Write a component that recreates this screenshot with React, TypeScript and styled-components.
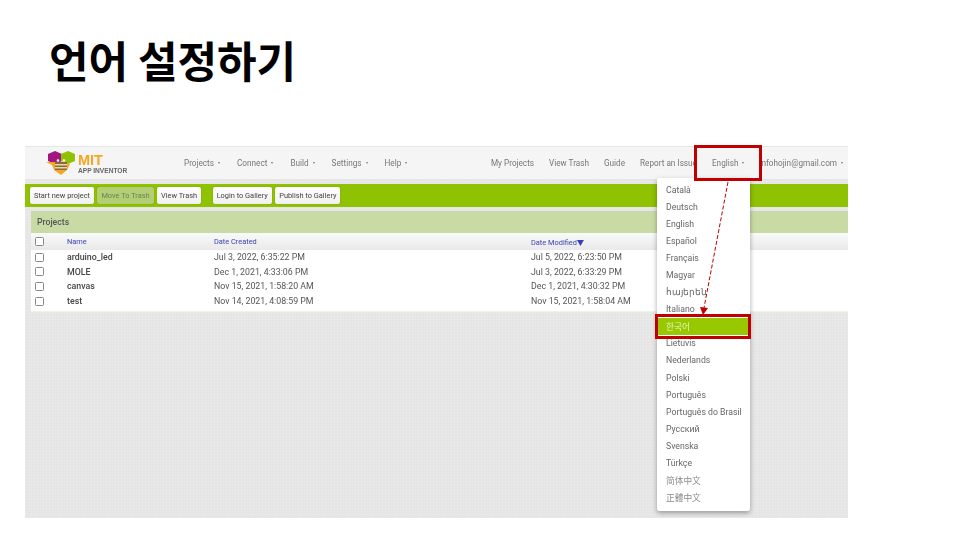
import React from "react";
import styled, { createGlobalStyle } from "styled-components";

const projects = [
  { name: "arduino_led", created: "Jul 3, 2022, 6:35:22 PM", modified: "Jul 5, 2022, 6:23:50 PM" },
  { name: "MOLE", created: "Dec 1, 2021, 4:33:06 PM", modified: "Jul 3, 2022, 6:33:29 PM" },
  { name: "canvas", created: "Nov 15, 2021, 1:58:20 AM", modified: "Dec 1, 2021, 4:30:32 PM" },
  { name: "test", created: "Nov 14, 2021, 4:08:59 PM", modified: "Nov 15, 2021, 1:58:04 AM" },
];

const languages = [
  "Català", "Deutsch", "English", "Español", "Français", "Magyar", "հայերեն", "Italiano", "한국어",
  "Lietuvis", "Nederlands", "Polski", "Português", "Português do Brasil", "Русский", "Svenska",
  "Türkçe", "简体中文", "正體中文",
];

const Logo = () => (
  <svg width="30" height="24" viewBox="0 0 30 24">
    <polygon points="9,0 16,3 16,10 9,13 2,10 2,3" fill="#a1167f" />
    <polygon points="22,0 29,3 29,10 22,13 15,10 15,3" fill="#8fc202" />
    <polygon points="0,11 9,11 9,16 12,18 18,18 21,16 21,12 24,13 21,19 15,24 8,19 6,14" fill="#f6a623" />
    <rect x="9" y="11" width="12" height="8" fill="#8a6a3a" />
    <rect x="9" y="13" width="12" height="1.5" fill="#e8d5a8" />
    <rect x="9" y="16" width="12" height="1.5" fill="#e8d5a8" />
    <circle cx="12" cy="9.5" r="1.3" fill="#fff" />
    <circle cx="18" cy="9.5" r="1.3" fill="#fff" />
  </svg>
);

const App: React.FC = () => {
  return (
    <Page>
      <GlobalStyle />
      <Title>언어 설정하기</Title>
      <Shot>
        <ShotInner>
          <NavBar>
            <LogoWrap>
              <Logo />
              <LogoText>
                <LogoMit>MIT</LogoMit>
                <LogoSub>APP INVENTOR</LogoSub>
              </LogoText>
            </LogoWrap>
            <NavLeft>
              <NavItem>Projects<Caret /></NavItem>
              <NavItem>Connect<Caret /></NavItem>
              <NavItem>Build<Caret /></NavItem>
              <NavItem>Settings<Caret /></NavItem>
              <NavItem>Help<Caret /></NavItem>
            </NavLeft>
            <NavRight>
              <NavItem>My Projects</NavItem>
              <NavItem>View Trash</NavItem>
              <NavItem>Guide</NavItem>
              <NavItem>Report an Issue</NavItem>
              <NavItem>English<Caret /></NavItem>
              <NavItem>infohojin@gmail.com<Caret /></NavItem>
            </NavRight>
          </NavBar>
          <Toolbar>
            <ToolGroup>
              <ToolButton>Start new project</ToolButton>
              <ToolButton $disabled>Move To Trash</ToolButton>
              <ToolButton>View Trash</ToolButton>
            </ToolGroup>
            <ToolGroup>
              <ToolButton>Login to Gallery</ToolButton>
              <ToolButton>Publish to Gallery</ToolButton>
            </ToolGroup>
          </Toolbar>
          <Panel>
            <PanelHeader>Projects</PanelHeader>
            <TableHead>
              <CheckBox />
              <HeadCell>Name</HeadCell>
              <HeadCell>Date Created</HeadCell>
              <HeadCell>Date Modified▼</HeadCell>
            </TableHead>
            <TableBody>
              {projects.map((p) => (
                <Row key={p.name}>
                  <CheckBox />
                  <NameCell>{p.name}</NameCell>
                  <DateCell>{p.created}</DateCell>
                  <DateCell>{p.modified}</DateCell>
                </Row>
              ))}
            </TableBody>
          </Panel>
          <Menu>
            {languages.map((l, i) => (
              <MenuItem key={l} $active={l === "한국어"} $faint={i >= 17}>{l}</MenuItem>
            ))}
          </Menu>
        </ShotInner>
        <EnglishMark />
        <KoreanMark />
        <ArrowLayer width="823" height="372" viewBox="0 0 823 372">
          <line x1="703" y1="36" x2="679" y2="162" stroke="#c00000" strokeWidth="1" strokeDasharray="4 2" />
          <polygon points="675,161 683,162 678,169" fill="#c00000" />
        </ArrowLayer>
      </Shot>
    </Page>
  );
};

const GlobalStyle = createGlobalStyle`
  html, body {
    margin: 0;
    padding: 0;
    background: #fff;
  }
`;

const Page = styled.div`
  width: 960px;
  height: 540px;
  overflow: hidden;
  font-family: Roboto, "Noto Sans CJK KR", sans-serif;
`;

const Title = styled.h1`
  margin: 0;
  padding: 29px 0 0 49px;
  height: 146px;
  box-sizing: border-box;
  font-family: "Noto Sans CJK KR", sans-serif;
  font-size: 43px;
  font-weight: 700;
  line-height: 60px;
  color: #000;
`;

const Shot = styled.div`
  position: relative;
  margin-left: 25px;
  width: 823px;
  height: 372px;
`;

const ShotInner = styled.div`
  position: relative;
  width: 100%;
  height: 100%;
  overflow: hidden;
  filter: blur(0.4px);
  background-color: #e5e5e5;
  background-image: repeating-linear-gradient(90deg, rgba(255, 255, 255, 0.1) 0 1px, transparent 1px 3px),
    repeating-linear-gradient(0deg, rgba(255, 255, 255, 0.1) 0 1px, transparent 1px 3px);
`;

const NavBar = styled.div`
  display: flex;
  align-items: center;
  height: 33px;
  background: #f5f5f5;
  border-top: 1px solid #e6e6e6;
  box-sizing: border-box;
  padding-left: 21px;
`;

const LogoWrap = styled.div`
  display: flex;
  align-items: center;
  gap: 2px;
  width: 138px;
  flex: none;
`;

const LogoText = styled.div`
  display: flex;
  flex-direction: column;
  margin-top: 2px;
`;

const LogoMit = styled.span`
  font-family: "Liberation Sans", sans-serif;
  font-size: 14.5px;
  line-height: 13px;
  font-weight: 700;
  color: #f5a623;
`;

const LogoSub = styled.span`
  font-family: "Liberation Sans", sans-serif;
  font-size: 6.6px;
  line-height: 8px;
  font-weight: 700;
  color: #666;
  white-space: nowrap;
`;

const NavLeft = styled.div`
  display: flex;
  gap: 17px;
`;

const NavRight = styled.div`
  display: flex;
  margin-left: auto;
  margin-right: 5px;
  gap: 15px;
`;

const NavItem = styled.span`
  display: inline-flex;
  align-items: center;
  font-size: 8.2px;
  color: #777;
  white-space: nowrap;
`;

const Caret = styled.i`
  display: inline-block;
  margin-left: 4px;
  border-top: 2px solid #777;
  border-left: 1.5px solid transparent;
  border-right: 1.5px solid transparent;
`;

const Toolbar = styled.div`
  display: flex;
  align-items: center;
  gap: 11.5px;
  height: 23px;
  margin-top: 5px;
  padding-left: 5px;
  background: #8fc202;
`;

const ToolGroup = styled.div`
  display: flex;
  gap: 3.5px;
`;

const ToolButton = styled.div<{ $disabled?: boolean }>`
  height: 17px;
  padding: 0 4px;
  display: flex;
  align-items: center;
  border-radius: 2px;
  font-size: 7.4px;
  white-space: nowrap;
  color: ${(p) => (p.$disabled ? "#6f7f50" : "#444")};
  background: ${(p) => (p.$disabled ? "#b3cf75" : "linear-gradient(#fff, #f0f0f0)")};
  box-shadow: 0 0 1px rgba(0, 0, 0, 0.4);
`;

const Panel = styled.div`
  margin: 4px 0 0 6px;
  background: #fff;
  padding-bottom: 3px;
  box-shadow: 0 1px 1px #f1f1e6;
`;

const PanelHeader = styled.div`
  height: 22px;
  display: flex;
  align-items: center;
  padding-left: 6px;
  background: #c9dba5;
  font-size: 8.7px;
  font-weight: 500;
  color: #555;
`;

const tableColumns = "36px 147px 317px 1fr";

const TableHead = styled.div`
  display: grid;
  grid-template-columns: ${tableColumns};
  align-items: center;
  height: 17px;
  background: linear-gradient(#fafafa, #e9e9e9);
`;

const HeadCell = styled.span`
  font-size: 7.4px;
  color: #3a3fb5;
`;

const TableBody = styled.div`
  display: flex;
  flex-direction: column;
`;

const Row = styled.div`
  display: grid;
  grid-template-columns: ${tableColumns};
  align-items: center;
  height: 14.6px;
`;

const CheckBox = styled.span`
  display: block;
  width: 7px;
  height: 7px;
  margin-left: 4px;
  border: 1px solid #888;
  border-radius: 1.5px;
  background: #fff;
`;

const NameCell = styled.span`
  font-size: 8.8px;
  font-weight: 500;
  color: #444;
`;

const DateCell = styled.span`
  font-size: 8.8px;
  color: #555;
`;

const Menu = styled.div`
  position: absolute;
  top: 32px;
  left: 632px;
  width: 93px;
  padding: 3px 0 5px;
  background: #fff;
  border-radius: 2px;
  box-shadow: 0 2px 5px rgba(0, 0, 0, 0.35);
`;

const MenuItem = styled.div<{ $active?: boolean; $faint?: boolean }>`
  height: 17.1px;
  display: flex;
  align-items: center;
  padding-left: 9px;
  font-size: 8.7px;
  white-space: nowrap;
  color: ${(p) => (p.$active ? "#e8f4c0" : p.$faint ? "#8c8c8c" : "#666")};
  background: ${(p) => (p.$active ? "#97c800" : "transparent")};
`;

const EnglishMark = styled.div`
  position: absolute;
  left: 669px;
  top: -1px;
  width: 68px;
  height: 36px;
  box-sizing: border-box;
  border: 3px solid #c00000;
`;

const KoreanMark = styled.div`
  position: absolute;
  left: 630px;
  top: 168px;
  width: 96px;
  height: 25px;
  box-sizing: border-box;
  border: 3px solid #c00000;
`;

const ArrowLayer = styled.svg`
  position: absolute;
  left: 0;
  top: 0;
  pointer-events: none;
`;

export default App;
